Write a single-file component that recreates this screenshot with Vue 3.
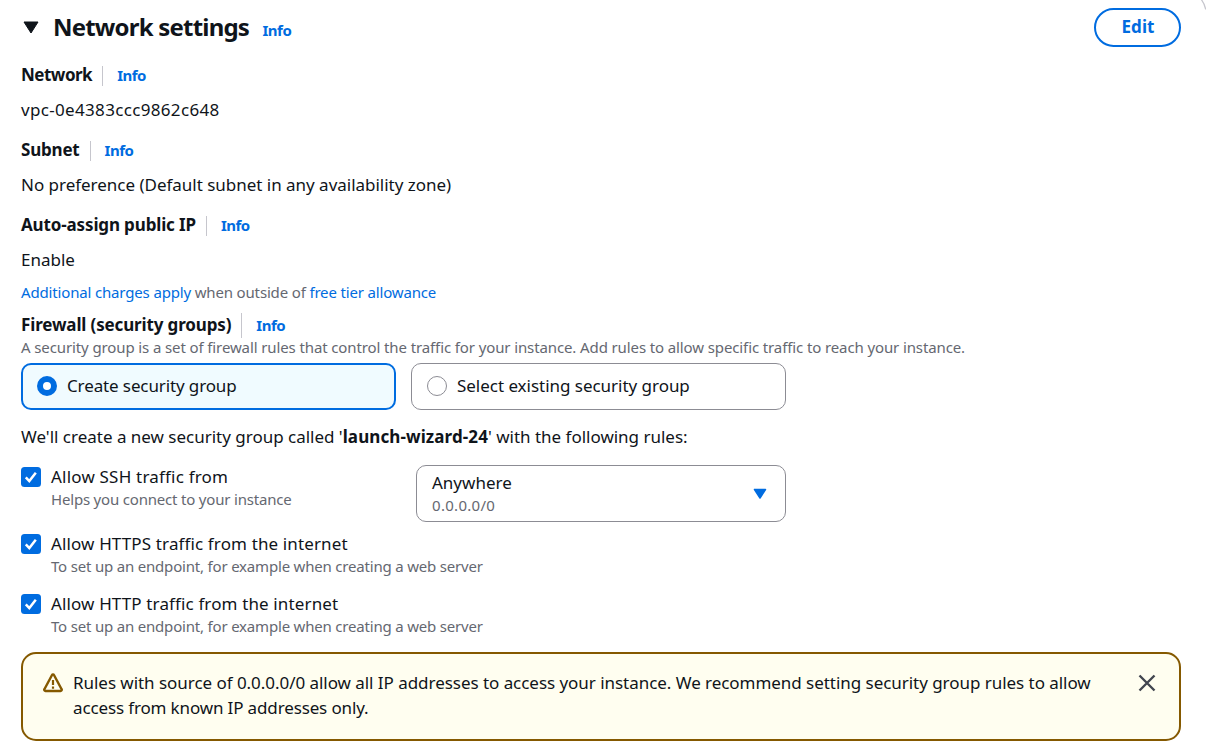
<script setup>
const rules = [
  { id: 'https', title: 'Allow HTTPS traffic from the internet', hint: 'To set up an endpoint, for example when creating a web server' },
  { id: 'http', title: 'Allow HTTP traffic from the internet', hint: 'To set up an endpoint, for example when creating a web server' },
]
</script>

<template>
  <main class="panel">
    <svg class="panel-corner" viewBox="0 0 6 12" aria-hidden="true"><path d="M-.5-2.500C2.500.5 4.800 4.500 5.700 9.500" /></svg>

    <header class="header">
      <svg class="caret" viewBox="0 0 16 13" aria-hidden="true"><path d="M1 1h14L8 12z" /></svg>
      <h2>Network settings</h2>
      <a class="info">Info</a>
      <button class="edit">Edit</button>
    </header>

    <div class="label"><b class="network">Network</b><i class="rule"></i><a class="info">Info</a></div>
    <div class="value vpc">vpc-0e4383ccc9862c648</div>
    <div class="label"><b class="subnet">Subnet</b><i class="rule"></i><a class="info">Info</a></div>
    <div class="value preference">No preference (Default subnet in any availability zone)</div>
    <div class="label"><b class="auto">Auto-assign public IP</b><i class="rule"></i><a class="info">Info</a></div>
    <div class="value enable">Enable</div>
    <p class="small charges"><a>Additional charges apply</a> when outside of <a>free tier allowance</a></p>

    <div class="label firewall"><b class="auto">Firewall (security groups)</b><i class="rule tall"></i><a class="info">Info</a></div>
    <p class="small description">A security group is a set of firewall rules that control the traffic for your instance. Add rules to allow specific traffic to reach your instance.</p>

    <div class="tiles">
      <div class="tile selected"><span class="radio"></span><span class="create">Create security group</span></div>
      <div class="tile"><span class="radio"></span><span class="existing">Select existing security group</span></div>
    </div>

    <p class="summary">We'll create a new security group called '<b>launch-wizard-24</b>' with the following rules:</p>

    <div class="ssh">
      <div class="check">
        <svg class="box" viewBox="0 0 20 20"><rect width="20" height="20" rx="3.5" /><path d="M4.800 10.300l3.500 3.700 6.500-8.200" /></svg>
        <div class="check-text"><div class="ssh-title">Allow SSH traffic from</div><div class="small hint">Helps you connect to your instance</div></div>
      </div>
      <div class="select">
        <div><div>Anywhere</div><div class="small cidr">0.0.0.0/0</div></div>
        <svg class="select-caret" viewBox="0 0 14 12"><path d="M1.500 1.500h11L7 10z" /></svg>
      </div>
    </div>
    <div v-for="r in rules" :key="r.id" class="check internet">
      <svg class="box" viewBox="0 0 20 20"><rect width="20" height="20" rx="3.5" /><path d="M4.800 10.300l3.500 3.700 6.500-8.200" /></svg>
      <div class="check-text"><div class="check-title">{{ r.title }}</div><div class="small hint">{{ r.hint }}</div></div>
    </div>

    <section class="alert">
      <svg class="warning" viewBox="0 0 20 20"><path d="M8.900 2.200a1.250 1.250 0 0 1 2.200 0l7.500 14a1.200 1.200 0 0 1-1.100 1.800H2.500a1.200 1.200 0 0 1-1.100-1.800z" /><path class="mark" d="M10 7v5M10 13.500v2.200" /></svg>
      <p><span class="line-one">Rules with source of 0.0.0.0/0 allow all IP addresses to access your instance. We recommend setting security group rules to allow</span><br><span class="line-two">access from known IP addresses only.</span></p>
      <svg class="close" viewBox="0 0 18 18"><path d="M1.500 1.500l15 15M16.500 1.500l-15 15" /></svg>
    </section>
  </main>
</template>

<style>
body { background: #fff; overflow: hidden; }
</style>

<style scoped>
* { box-sizing: border-box; }
.panel {
  position: relative; width: 1206px; height: 750px; padding: 8px 25px 0 21px; overflow: hidden;
  display: flex; flex-direction: column;
  font: 400 17px/25px "Noto Sans", sans-serif; color: #0f141a; white-space: nowrap;
}
.panel-corner { position: absolute; top: 0; right: 0; width: 6px; height: 12px; fill: none; stroke: #c6c6cd; stroke-width: 1.2; }
h2, p { margin: 0; font-weight: 400; }
b { font-weight: 700; }
a { color: #006ce0; }
.header { display: flex; height: 54px; flex: none; }
.caret { width: 16px; height: 13px; margin: 13px 15px 0 2px; fill: #0f141a; stroke: #0f141a; stroke-width: 1; stroke-linejoin: round; }
h2 { font-size: 24px; line-height: 38px; font-weight: 700; letter-spacing: -.8px; width: 209.500px; margin-left: -1px; }
.info { font-size: 15px; font-weight: 700; letter-spacing: -.5px; }
.header .info { line-height: 45px; }
.edit {
  margin-left: auto; width: 87px; height: 39px; padding: 0 0 2px 1px; border: 2px solid #006ce0; border-radius: 20px;
  background: #fff; color: #006ce0; font: 700 17px/33px "Noto Sans", sans-serif; letter-spacing: .1px;
}
.label { display: flex; height: 25px; flex: none; }
.label .info { line-height: 27px; }
.network { letter-spacing: -.5px; }
.subnet { letter-spacing: -.2px; }
.auto { letter-spacing: -.14px; }
.rule { flex: none; width: 1px; height: 20px; margin: 4px 14px 0 10px; background: #c6c6cd; }
.rule.tall { height: 25px; margin-top: 1px; }
.value { height: 25px; margin: 10px 0 15px; flex: none; }
.vpc { letter-spacing: .33px; }
.preference { letter-spacing: -.02px; }
.value.enable { margin-bottom: 10px; }
.small { font-size: 15px; line-height: 20px; color: #656871; }
.charges { letter-spacing: -.16px; }
.firewall { margin-top: 10px; }
.description { letter-spacing: -.113px; margin-bottom: 6px; }
.tiles { display: flex; gap: 15px; }
.tile {
  display: flex; align-items: center; gap: 10px; width: 375px; height: 47px; padding: 0 0 3px 15px;
  border: 1px solid #8c8c94; border-radius: 10px;
}
.tile.selected { border: 2px solid #006ce0; background: #f0fbff; padding-left: 14px; }
.radio { width: 20px; height: 20px; margin-top: 2px; border: 1px solid #8c8c94; border-radius: 50%; background: #fff; }
.selected .radio { border: 6px solid #006ce0; }
.create { letter-spacing: -.12px; }
.existing { letter-spacing: -.03px; }
.summary { margin: 14px 0 16px; letter-spacing: -.01px; }
.summary b { letter-spacing: .1px; }
.ssh { display: flex; justify-content: space-between; width: 765px; height: 67px; flex: none; }
.check { display: flex; gap: 10px; }
.check-text { margin-top: -1px; }
.internet { height: 60px; flex: none; }
.box { width: 20px; height: 20px; margin-top: 2px; fill: #006ce0; }
.box path { fill: none; stroke: #fff; stroke-width: 2.5; }
.ssh-title { letter-spacing: .2px; }
.check-title { letter-spacing: .13px; }
.hint { letter-spacing: -.19px; }
.select {
  display: flex; justify-content: space-between; align-items: center; width: 370px; height: 57px; padding: 0 18px 2px 15px;
  border: 1px solid #8c8c94; border-radius: 10px;
}
.cidr { letter-spacing: .3px; }
.select-caret { width: 14px; height: 12px; margin-top: 2px; fill: #006ce0; stroke: #006ce0; stroke-width: 1.5; stroke-linejoin: round; }
.alert {
  display: flex; width: 1160px; height: 89px; padding: 16px 23px 0 20px;
  border: 2px solid #855900; border-radius: 15px; background: #fffef0;
}
.warning { width: 20px; height: 20px; margin: 3px 10px 0 0; fill: none; stroke: #855900; stroke-width: 2.4; stroke-linejoin: round; }
.warning .mark { stroke-width: 2.2; }
.line-one { letter-spacing: -.042px; }
.line-two { letter-spacing: -.14px; }
.close { width: 18px; height: 18px; margin: 4px 0 0 auto; fill: none; stroke: #424650; stroke-width: 2.4; }
</style>
